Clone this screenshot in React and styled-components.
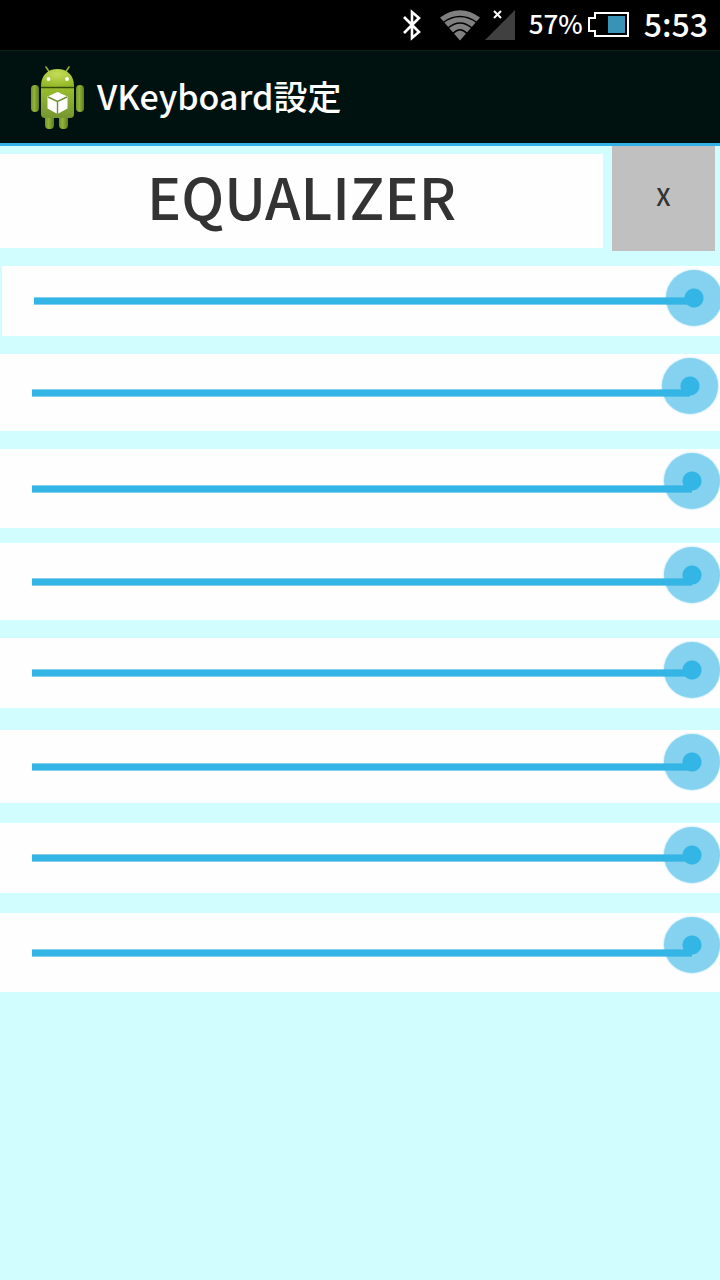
import React from "react";
import styled, { createGlobalStyle } from "styled-components";

const GlobalStyle = createGlobalStyle`
  *, *::before, *::after { box-sizing: border-box; }
  html, body { margin: 0; min-height: 100%; background: #d2fdff; }
  body { font-family: "Noto Sans CJK JP", "Noto Sans", sans-serif; overflow-x: hidden; }
  button, input { font-family: inherit; }
`;

const Screen = styled.div`
  min-height: 100vh;
  overflow: hidden;
  background: #d2fdff;
`;

const StatusBar = styled.div`
  display: flex;
  align-items: center;
  justify-content: flex-end;
  height: 50px;
  padding-right: 12px;
  background: #000;
  color: #fff;
  svg { display: block; flex: none; }
`;

const StatusIcons = styled.div`
  display: flex;
  align-items: center;
  gap: 4px;
  margin-right: 13px;
`;

const BluetoothSlot = styled.span`
  margin-right: 14px;
`;

const StatusText = styled.span`
  padding-bottom: 4px;
  font-size: ${(p) => p.$size}px;
  font-weight: 500;
  line-height: 46px;
`;

const Percent = styled(StatusText)`
  margin-right: 5px;
`;

const Clock = styled(StatusText)`
  margin-left: 14px;
`;

const ActionBar = styled.header`
  display: flex;
  align-items: center;
  gap: 12px;
  height: 96px;
  padding: 2px 0 0 29px;
  border-top: 1px solid #0b1f1d;
  border-bottom: 3px solid #33b0e5;
  background: #001210;
  color: #fff;
  svg { display: block; flex: none; }
`;

const AppTitle = styled.h1`
  margin: 0;
  padding-bottom: 4px;
  font-size: 34px;
  line-height: 48px;
  font-weight: 500;
  white-space: nowrap;
`;

const TitleRow = styled.div`
  display: flex;
  align-items: flex-start;
  gap: 9px;
  height: 120px;
  padding-right: 5px;
`;

const Heading = styled.h2`
  flex: 1;
  margin: 8px 0 0;
  height: 94px;
  background: #fefefe;
  color: #333;
  font-size: 57px;
  font-weight: 500;
  line-height: 82px;
  text-align: center;
`;

const CloseButton = styled.button`
  width: 103px;
  height: 105px;
  padding: 0 0 6px;
  border: 0;
  background: #c0c0c0;
  color: #333;
  font-size: 24px;
  font-weight: 500;
`;

const Band = styled.label`
  display: block;
  height: ${(p) => p.$height}px;
  margin: 0 ${(p) => -p.$shift}px ${(p) => p.$gap}px ${(p) => p.$shift}px;
  padding: 0 ${(p) => p.$inset}px 0 4px;
  background: #fefefe;
`;

const Slider = styled.input`
  appearance: none;
  display: block;
  width: 100%;
  height: 100%;
  margin: 0;
  background: linear-gradient(#84cfee 1px, #33b5e5 1px, #33b5e5 7px, #84cfee 7px)
    28px 50% / calc(100% - 56px) 8px no-repeat;
  outline: none;

  &::-webkit-slider-runnable-track {
    height: 100%;
    background: transparent;
  }
  &::-webkit-slider-thumb {
    appearance: none;
    width: 56px;
    height: 56px;
    margin-top: 4px;
    border: 0;
    border-radius: 50%;
    background: radial-gradient(circle, #33b5e5 9px, rgba(51, 181, 229, 0.6) 10px);
    box-shadow: 0 0 2px rgba(51, 181, 229, 0.6);
  }
`;

const bands = [
  { height: 70, gap: 18, shift: 2 },
  { height: 77, gap: 18, inset: 2 },
  { height: 79, gap: 15 },
  { height: 77, gap: 18 },
  { height: 70, gap: 22 },
  { height: 73, gap: 20 },
  { height: 70, gap: 20 },
  { height: 79, gap: 0 },
];

const BluetoothIcon = () => (
  <svg width="20" height="34" viewBox="0 0 20 34" fill="none" stroke="#fff" strokeWidth="2.6">
    <path d="M2 9 17 24 10 30V4l7 6L2 25" />
  </svg>
);

const WifiIcon = () => (
  <svg width="40" height="32" viewBox="0 0 40 32">
    <path d="M0 8.500Q20-6 40 8.500L20 31.500Z" fill="#808080" />
    <g fill="none" stroke="#000" strokeWidth="1.500">
      <path d="M3 13.500Q20 1.500 37 13.500" />
      <path d="M8 19Q20 9 32 19" />
      <path d="M13 24.500Q20 17 27 24.500" />
    </g>
  </svg>
);

const SignalIcon = () => (
  <svg width="32" height="32" viewBox="0 0 32 32">
    <path d="M31 1V31H1Z" fill="#404040" />
    <path d="m10 2 7 7m0-7-7 7" stroke="#fff" strokeWidth="2" />
  </svg>
);

const BatteryIcon = () => (
  <svg width="42" height="26" viewBox="0 0 42 26">
    <path d="M7 1H40V24H7V19H1V6H7Z" fill="none" stroke="#fff" strokeWidth="2" />
    <rect x="20" y="4" width="17" height="17" fill="#3993b7" />
  </svg>
);

const RobotIcon = () => (
  <svg width="56" height="64" viewBox="0 0 56 64">
    <defs>
      <linearGradient id="limb" x1="0" x2="1" y1="0" y2="0">
        <stop offset="0" stopColor="#70912a" />
        <stop offset="0.4" stopColor="#93b537" />
        <stop offset="1" stopColor="#5c7b20" />
      </linearGradient>
      <linearGradient id="torso" x1="0" x2="0" y1="0" y2="1">
        <stop offset="0" stopColor="#9bbf2d" />
        <stop offset="1" stopColor="#759632" />
      </linearGradient>
      <radialGradient id="head" cx="0.5" cy="0.3" r="0.8">
        <stop offset="0" stopColor="#c5dd58" />
        <stop offset="1" stopColor="#8fb524" />
      </radialGradient>
    </defs>
    <path d="m17 1 4 6m19-6-4 6" stroke="#8fb02f" strokeWidth="1.6" strokeLinecap="round" />
    <rect x="16" y="46" width="9" height="17" rx="4" fill="url(#limb)" />
    <rect x="30" y="46" width="9" height="17" rx="4" fill="url(#limb)" />
    <rect x="2" y="19" width="8" height="27" rx="4" fill="url(#limb)" />
    <rect x="47" y="19" width="8" height="27" rx="4" fill="url(#limb)" />
    <path d="M12 20H45V48Q45 52 41 52H16Q12 52 12 48Z" fill="url(#torso)" />
    <path d="M12 20C12 9 19 3 28.500 3S45 9 45 20Z" fill="url(#head)" />
    <path d="M12 21.500H45" stroke="#324a0c" strokeWidth="1.500" />
    <circle cx="19.500" cy="13" r="1.900" fill="#fff" />
    <circle cx="38" cy="13" r="1.900" fill="#fff" />
    <path d="m28.500 26 10 4.500v12L28.500 48l-10-5.500v-12Z" fill="#fff" />
    <path d="m19 31 9.500 4.500L38 31M28.500 35.500V48" fill="none" stroke="#718e31" strokeWidth="1.400" />
  </svg>
);

export default function App() {
  return (
    <Screen>
      <GlobalStyle />
      <StatusBar>
        <StatusIcons>
          <BluetoothSlot>
            <BluetoothIcon />
          </BluetoothSlot>
          <WifiIcon />
          <SignalIcon />
        </StatusIcons>
        <Percent $size={26}>57%</Percent>
        <BatteryIcon />
        <Clock as="time" $size={32}>5:53</Clock>
      </StatusBar>
      <ActionBar>
        <RobotIcon />
        <AppTitle>VKeyboard設定</AppTitle>
      </ActionBar>
      <main>
        <TitleRow>
          <Heading>EQUALIZER</Heading>
          <CloseButton type="button">X</CloseButton>
        </TitleRow>
        {bands.map(({ height, gap, shift = 0, inset = 0 }, i) => (
          <Band key={i} $height={height} $gap={gap} $shift={shift} $inset={inset}>
            <Slider type="range" min="0" max="100" defaultValue="100" aria-label={`Band ${i + 1}`} />
          </Band>
        ))}
      </main>
    </Screen>
  );
}
